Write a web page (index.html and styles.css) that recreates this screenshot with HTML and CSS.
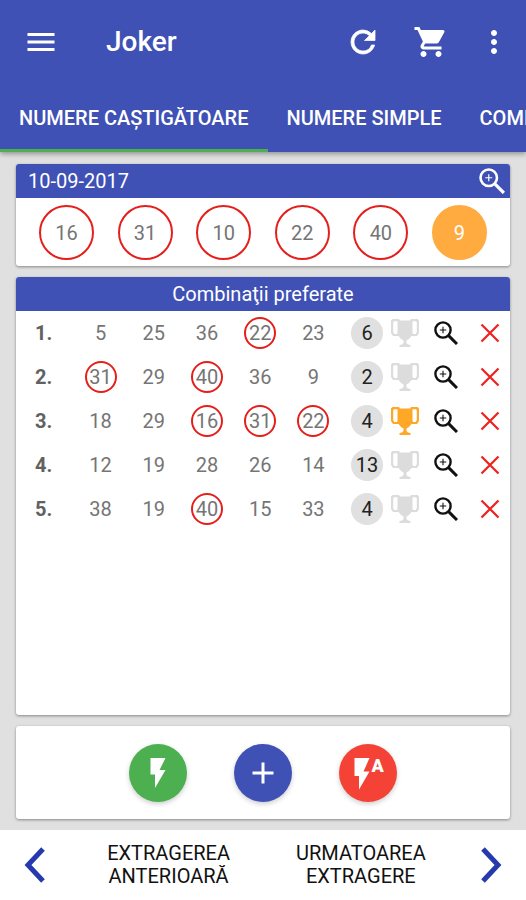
FILE: index.html
```html
<!DOCTYPE html>
<html lang="ro">

<head>
    <meta charset="UTF-8">
    <meta name="viewport" content="width=device-width, initial-scale=1.0">
    <title>Joker</title>
    <link rel="stylesheet" href="styles.css">
</head>

<body>
    <svg class="sprite" aria-hidden="true">
        <symbol id="zoom" viewBox="0 0 24 24">
            <circle cx="9" cy="9" r="7.6" fill="none" stroke="currentColor" stroke-width="2.4" />
            <path d="M14.6 14.6L23 23" fill="none" stroke="currentColor" stroke-width="3" />
            <path d="M9 5.8v6.4M5.8 9h6.4" fill="none" stroke="currentColor" stroke-width="1.1" />
        </symbol>
        <symbol id="trophy" viewBox="0 0 28 28">
            <path fill="currentColor" fill-rule="evenodd" d="M1.500 0H8l1 1.500h10L20 0h6.500L28 1.500V14l-2 3h-5.500l-2.500 3-2.500 1.500v2.500l1.500 1.500 2.500.5V28h-11v-2l2.500-.5 1.500-1.500v-2.500L10 20l-2.500-3H2l-2-3V1.500zM3 2.200l-.8 1v9.800l1 2h2.600L6.500 14V2.200zM21.500 2.200V14l.7 1h2.600l1-2V3.200l-.8-1z" />
        </symbol>
        <symbol id="cross" viewBox="0 0 20 20">
            <path d="M1.500 1.500l17 17M18.500 1.500l-17 17" fill="none" stroke="currentColor" stroke-width="2.200" />
        </symbol>
    </svg>

    <header class="appbar">
        <div class="toolbar">
            <button class="icon-btn" aria-label="Meniu">
                <svg class="icon" viewBox="0 0 24 24"><path d="M3 18h18v-2H3v2zm0-5h18v-2H3v2zm0-7v2h18V6H3z" /></svg>
            </button>
            <h1 class="title">Joker</h1>
            <button class="icon-btn" aria-label="Reîncarcă">
                <svg class="icon" viewBox="0 0 24 24"><path d="M17.650 6.350A7.958 7.958 0 0 0 12 4c-4.420 0-7.990 3.580-7.990 8s3.570 8 7.990 8c3.730 0 6.840-2.550 7.730-6h-2.080A5.990 5.990 0 0 1 12 18c-3.310 0-6-2.690-6-6s2.690-6 6-6c1.660 0 3.140.69 4.220 1.780L13 11h7V4z" stroke="currentColor" stroke-width=".5" /></svg>
            </button>
            <button class="icon-btn" aria-label="Coș">
                <svg class="icon" viewBox="0 0 24 24"><path d="M7 18c-1.100 0-1.990.9-1.990 2S5.900 22 7 22s2-.9 2-2-.9-2-2-2zM1 2v2h2l3.600 7.590-1.350 2.450c-.16.280-.25.610-.25.960 0 1.100.9 2 2 2h12v-2H7.420c-.14 0-.25-.11-.25-.25l.03-.12.900-1.630h7.450c.75 0 1.410-.41 1.750-1.030l3.580-6.490A1.003 1.003 0 0 0 20 4H5.210l-.94-2H1zm16 16c-1.100 0-1.990.9-1.990 2s.89 2 1.990 2 2-.9 2-2-.9-2-2-2z" /><path d="M5.500 5h14l-3.200 6.500H8.500z" /></svg>
            </button>
            <button class="icon-btn overflow" aria-label="Mai multe">
                <svg class="icon" viewBox="0 0 24 24"><path d="M12 8c1.100 0 2-.9 2-2s-.9-2-2-2-2 .9-2 2 .9 2 2 2zm0 2c-1.100 0-2 .9-2 2s.9 2 2 2 2-.9 2-2-.9-2-2-2zm0 6c-1.100 0-2 .9-2 2s.9 2 2 2 2-.9 2-2-.9-2-2-2z" /></svg>
            </button>
        </div>
        <nav class="tabs">
            <button class="tab active">NUMERE CAȘTIGĂTOARE</button>
            <button class="tab">NUMERE SIMPLE</button>
            <button class="tab">COMBINAȚII</button>
        </nav>
    </header>

    <main class="content">
        <section class="card">
            <div class="card-head">
                <h2>10-09-2017</h2>
                <button class="head-zoom" aria-label="Detalii"><svg><use href="#zoom" /></svg></button>
            </div>
            <div class="balls">
                <span class="ball">16</span>
                <span class="ball">31</span>
                <span class="ball">10</span>
                <span class="ball">22</span>
                <span class="ball">40</span>
                <span class="ball joker">9</span>
            </div>
        </section>

        <section class="card grow">
            <div class="card-head center">
                <h2>Combinaţii preferate</h2>
            </div>
            <table class="combos">
                <colgroup>
                    <col class="c-index">
                    <col span="5">
                    <col class="c-bonus">
                    <col class="c-cup">
                    <col class="c-zoom">
                    <col class="c-del">
                </colgroup>
                <tbody id="rows"></tbody>
            </table>
        </section>

        <section class="card actions">
            <button class="fab green" aria-label="Generează">
                <svg class="icon" viewBox="0 0 24 24"><path d="M7 2v11h3v9l7-12h-4l4-8z" /></svg>
            </button>
            <button class="fab blue" aria-label="Adaugă">
                <svg class="icon" viewBox="0 0 24 24"><path d="M19 13h-6v6h-2v-6H5v-2h6V5h2v6h6v2z" /></svg>
            </button>
            <button class="fab red" aria-label="Generează automat">
                <svg class="icon" viewBox="0 0 24 24"><path d="M3 2v12h3v9l7-12H9l4-9z" /><text class="auto" x="18.500" y="11">A</text></svg>
            </button>
        </section>
    </main>

    <footer class="pager">
        <button class="page prev">
            <svg class="chevron" viewBox="0 0 22 36"><path d="M19 2L4 18l15 16" /></svg>
            <span>EXTRAGEREA<br>ANTERIOARĂ</span>
        </button>
        <button class="page next">
            <span>URMATOAREA<br>EXTRAGERE</span>
            <svg class="chevron" viewBox="0 0 22 36"><path d="M3 2l15 16L3 34" /></svg>
        </button>
    </footer>

    <script src="script.js"></script>
</body>

</html>
```
FILE: styles.css
```css
* {
    padding: 0;
    margin: 0;
    box-sizing: border-box;
}

body {
    min-height: 100vh;
    display: flex;
    flex-direction: column;
    background-color: #e0e0e0;
    font-family: Roboto, "Noto Sans", sans-serif;
    font-size: 20px;
    color: #757575;
    overflow-x: hidden;
}

button {
    border: 0;
    background: none;
    color: inherit;
    font: inherit;
    cursor: pointer;
}

svg {
    display: block;
}

.sprite {
    position: absolute;
    width: 0;
    height: 0;
}

.icon {
    width: 36px;
    height: 36px;
    fill: currentColor;
}

/* app bar */
.appbar {
    background-color: #3f51b5;
    color: #fff;
    box-shadow: 0 2px 5px rgba(0, 0, 0, .35);
}

.toolbar {
    height: 83px;
    display: flex;
    align-items: center;
    padding: 0 4px 0 7px;
}

.icon-btn {
    width: 68px;
    height: 68px;
    display: flex;
    align-items: center;
    justify-content: center;
}

.icon-btn.overflow {
    width: 57px;
}

.title {
    flex: 1;
    padding-left: 31px;
    font-size: 28px;
    font-weight: 500;
}

.tabs {
    height: 69px;
    display: flex;
    overflow: hidden;
}

.tab {
    flex: none;
    padding: 4px 19px 0;
    font-weight: 500;
    border-bottom: 3px solid transparent;
}

.tab.active {
    border-color: #4caf50;
}

/* cards */
.content {
    flex: 1;
    display: flex;
    flex-direction: column;
    gap: 11px;
    padding: 12px 16px 11px;
}

.card {
    background-color: #fff;
    border-radius: 3px;
    box-shadow: 0 1px 3px rgba(0, 0, 0, .4);
    overflow: hidden;
}

.card.grow {
    flex: 1;
}

.card-head {
    height: 34px;
    display: flex;
    align-items: center;
    justify-content: space-between;
    padding: 0 5px 0 12px;
    background-color: #3f51b5;
    color: #fff;
}

.card-head.center {
    justify-content: center;
    padding: 0;
}

.card-head h2 {
    font-size: 20px;
    font-weight: 400;
}

.head-zoom svg {
    width: 26px;
    height: 26px;
}

.balls {
    display: flex;
    justify-content: space-between;
    padding: 7px 23px 6px;
}

.ball {
    width: 55px;
    height: 55px;
    display: flex;
    align-items: center;
    justify-content: center;
    border: 2px solid #e5201c;
    border-radius: 50%;
}

.ball.joker {
    border-color: #ffab40;
    background-color: #ffab40;
    color: #fff;
}

/* combinations */
.combos {
    width: 100%;
    table-layout: fixed;
    border-collapse: collapse;
    text-align: center;
}

.c-index {
    width: 58px;
}

.c-bonus {
    width: 48px;
}

.c-cup {
    width: 34px;
}

.c-zoom {
    width: 48px;
}

.c-del {
    width: 40px;
}

.combos tr {
    height: 44px;
}

.combos th {
    padding-left: 19px;
    text-align: left;
    font-weight: 700;
    color: #616161;
}

.num,
.bonus {
    width: 32px;
    height: 32px;
    display: flex;
    align-items: center;
    justify-content: center;
    margin: 0 auto;
    border-radius: 50%;
}

.num.hit {
    border: 2px solid #e5201c;
}

.bonus {
    background-color: #e0e0e0;
    color: #212121;
}

.bonus-cell {
    padding-left: 6px;
}

.combos svg {
    margin: 0 auto;
}

.cup {
    width: 28px;
    height: 28px;
    color: #dcdcdc;
}

.cup.won {
    color: #ffa726;
}

.row-btn {
    display: block;
    margin: 0 auto;
    color: #111;
}

.row-btn svg {
    width: 24px;
    height: 24px;
}

.row-btn.del {
    color: #f0201c;
}

.row-btn.del svg {
    width: 20px;
    height: 20px;
}

/* round buttons */
.actions {
    display: flex;
    justify-content: center;
    gap: 47px;
    padding: 18px 0 17px;
}

.fab {
    width: 58px;
    height: 58px;
    display: flex;
    align-items: center;
    justify-content: center;
    border-radius: 50%;
    color: #fff;
    box-shadow: 0 2px 5px rgba(0, 0, 0, .2);
}

.green {
    background-color: #4caf50;
}

.blue {
    background-color: #3f51b5;
}

.red {
    background-color: #f44336;
}

.auto {
    font-size: 12px;
    font-weight: 900;
    text-anchor: middle;
}

/* bottom bar */
.pager {
    display: flex;
    height: 70px;
    background-color: #fff;
    color: #111;
}

.page {
    flex: 1;
    display: flex;
    align-items: center;
    justify-content: space-between;
    padding: 0 24px;
    line-height: 23px;
}

.prev {
    padding-right: 34px;
}

.next {
    padding-left: 32px;
}

.chevron {
    width: 22px;
    height: 36px;
    fill: none;
    stroke: #2639ad;
    stroke-width: 5;
}
```
FILE: script.js
```js
const combos = [
    { nums: [5, 25, 36, 22, 23], bonus: 6 },
    { nums: [31, 29, 40, 36, 9], bonus: 2 },
    { nums: [18, 29, 16, 31, 22], bonus: 4 },
    { nums: [12, 19, 28, 26, 14], bonus: 13 },
    { nums: [38, 19, 40, 15, 33], bonus: 4 }
];
const drawn = [16, 31, 10, 22, 40];

document.getElementById('rows').innerHTML = combos.map((combo, index) => {
    const hits = combo.nums.filter((n) => drawn.includes(n)).length;
    const cells = combo.nums.map((n) =>
        `<td><span class="num${drawn.includes(n) ? ' hit' : ''}">${n}</span></td>`
    ).join('');
    return `<tr>
        <th scope="row">${index + 1}.</th>
        ${cells}
        <td class="bonus-cell"><span class="bonus">${combo.bonus}</span></td>
        <td><svg class="cup${hits >= 3 ? ' won' : ''}"><use href="#trophy" /></svg></td>
        <td><button class="row-btn" aria-label="Detalii"><svg><use href="#zoom" /></svg></button></td>
        <td><button class="row-btn del" aria-label="Șterge"><svg><use href="#cross" /></svg></button></td>
    </tr>`;
}).join('');
```
